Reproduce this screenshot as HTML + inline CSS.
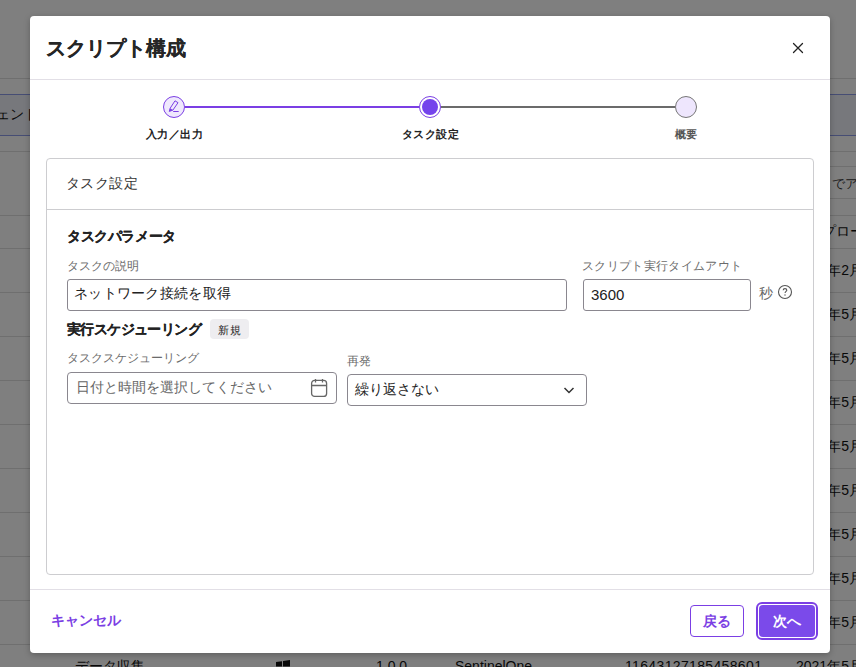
<!DOCTYPE html>
<html><head><meta charset="utf-8">
<style>
*{box-sizing:border-box;margin:0;padding:0}
html,body{width:856px;height:667px;overflow:hidden;font-family:"Liberation Sans",sans-serif;}
body{background:#fff;position:relative;}
.abs{position:absolute}
#bg{position:absolute;left:0;top:0;width:856px;height:667px;background:#fff;}
#overlay{position:absolute;left:0;top:0;width:856px;height:667px;background:rgba(0,0,0,0.5);}
#modal{position:absolute;left:30px;top:16px;width:800px;height:637px;background:#fff;border-radius:4px;box-shadow:0 2px 6px rgba(0,0,0,0.25);}
.t{position:absolute;white-space:nowrap;line-height:1;}
.b{-webkit-text-stroke:0.15px currentColor}
</style></head>
<body>
<div id="bg">
<div class="abs" style="left:0;top:78px;width:856px;height:1px;background:#dedede"></div>
<div class="abs" style="left:0;top:94px;width:856px;height:42px;background:#eff1f9;border-top:1px solid #8c9ae8;border-bottom:1px solid #8c9ae8"></div>
<div class="t" style="left:-4px;top:107px;font-size:14px;color:#111">ェント</div>
<div class="abs" style="left:0;top:151px;width:856px;height:1px;background:#dedede"></div>
<div class="abs" style="left:0;top:215px;width:856px;height:1px;background:#dedede"></div>
<div class="abs" style="left:0;top:248px;width:856px;height:1px;background:#dedede"></div>
<div class="abs" style="left:0;top:292px;width:856px;height:1px;background:#dedede"></div>
<div class="abs" style="left:0;top:336px;width:856px;height:1px;background:#dedede"></div>
<div class="abs" style="left:0;top:380px;width:856px;height:1px;background:#dedede"></div>
<div class="abs" style="left:0;top:424px;width:856px;height:1px;background:#dedede"></div>
<div class="abs" style="left:0;top:468px;width:856px;height:1px;background:#dedede"></div>
<div class="abs" style="left:0;top:512px;width:856px;height:1px;background:#dedede"></div>
<div class="abs" style="left:0;top:556px;width:856px;height:1px;background:#dedede"></div>
<div class="abs" style="left:0;top:600px;width:856px;height:1px;background:#dedede"></div>
<div class="abs" style="left:0;top:644px;width:856px;height:1px;background:#dedede"></div>
<div class="abs" style="left:806px;top:166px;width:50px;height:1px;background:#dedede"></div>
<div class="abs" style="left:806px;top:198px;width:50px;height:1px;background:#dedede"></div>
<div class="t" style="left:832px;top:177px;font-size:13px;color:#333">でア</div>
<div class="t" style="left:822px;top:224px;font-size:14px;color:#111">プロー</div>
<div class="t" style="left:796px;top:263px;font-size:14px;color:#111">2021年2月</div>
<div class="t" style="left:796px;top:307px;font-size:14px;color:#111">2021年5月</div>
<div class="t" style="left:796px;top:351px;font-size:14px;color:#111">2021年5月</div>
<div class="t" style="left:796px;top:395px;font-size:14px;color:#111">2021年5月</div>
<div class="t" style="left:796px;top:439px;font-size:14px;color:#111">2021年5月</div>
<div class="t" style="left:796px;top:483px;font-size:14px;color:#111">2021年5月</div>
<div class="t" style="left:796px;top:527px;font-size:14px;color:#111">2021年5月</div>
<div class="t" style="left:796px;top:571px;font-size:14px;color:#111">2021年5月</div>
<div class="t" style="left:796px;top:615px;font-size:14px;color:#111">2021年5月</div>
<div class="t" style="left:796px;top:659px;font-size:14px;color:#111">2021年5月</div>
<div class="t" style="left:75px;top:659px;font-size:14px;color:#111">データ収集</div>
<svg class="abs" style="left:276px;top:660px" width="14" height="14" viewBox="0 0 14 14"><path d="M0 2L6 1.2V6.6H0ZM7 1L14 0V6.6H7ZM0 7.4H6V12.8L0 12ZM7 7.4H14V14L7 13Z" fill="#111"/></svg>
<div class="t" style="left:376px;top:659px;font-size:14px;color:#111">1.0.0</div>
<div class="t" style="left:455px;top:659px;font-size:14px;color:#111">SentinelOne</div>
<div class="t" style="left:625px;top:659px;font-size:14px;color:#111;letter-spacing:0.35px">11643127185458601</div>
</div>
<div id="overlay"></div>
<div id="modal"></div>
<div id="content">
  <div class="t b" style="left:46px;top:38px;font-size:20px;font-weight:bold;color:#262626">スクリプト構成</div>
  <svg class="abs" style="left:792px;top:42px" width="12" height="12" viewBox="0 0 12 12"><path d="M1.5 1.5L10.5 10.5M10.5 1.5L1.5 10.5" stroke="#222" stroke-width="1.25" stroke-linecap="round"/></svg>
  <div class="abs" style="left:30px;top:79px;width:800px;height:1px;background:#e2dfe6"></div>

  <!-- stepper -->
  <div class="abs" style="left:185px;top:106px;width:234px;height:2px;background:#7b3fe4"></div>
  <div class="abs" style="left:441px;top:106px;width:234px;height:2px;background:#6b6b6b"></div>
  <div class="abs" style="left:163px;top:96px;width:22px;height:22px;border-radius:50%;border:1px solid #7b3fe4;background:#efe8fd"></div>
  <svg class="abs" style="left:163px;top:96px" width="22" height="22" viewBox="0 0 22 22"><path d="M6.3 15.4L7.1 12.3L12 4.8L15 6.7L9.9 14.1Z" fill="none" stroke="#7b3fe4" stroke-width="1" stroke-linejoin="miter"/><path d="M6.3 15.4L7.1 12.3L9.9 14.1Z" fill="#7b3fe4"/><path d="M10.2 15.5H15.7" stroke="#7b3fe4" stroke-width="1"/></svg>
  <div class="abs" style="left:419px;top:96px;width:22px;height:22px;border-radius:50%;border:1px solid #7b3fe4;background:#fff"></div>
  <div class="abs" style="left:422px;top:99px;width:16px;height:16px;border-radius:50%;background:#7443ec"></div>
  <div class="abs" style="left:675px;top:96px;width:22px;height:22px;border-radius:50%;border:1px solid #767676;background:#eee6fd"></div>
  <div class="t" style="left:144px;top:129px;width:60px;text-align:center;font-size:11px;letter-spacing:0.5px;text-indent:0.5px;font-weight:bold;color:#222">入力／出力</div>
  <div class="t" style="left:394px;top:129px;width:72px;text-align:center;font-size:11px;letter-spacing:0.5px;text-indent:0.5px;font-weight:bold;color:#222">タスク設定</div>
  <div class="t" style="left:656px;top:129px;width:60px;text-align:center;font-size:11px;letter-spacing:0.5px;text-indent:0.5px;font-weight:bold;color:#555">概要</div>

  <!-- card -->
  <div class="abs" style="left:46px;top:158px;width:768px;height:417px;border:1px solid #cdcdd0;border-radius:4px"></div>
  <div class="abs" style="left:47px;top:209px;width:766px;height:1px;background:#cdcdd0"></div>
  <div class="t" style="left:66px;top:176px;font-size:14px;color:#333;letter-spacing:0.4px">タスク設定</div>
  <div class="t b" style="left:67px;top:229px;font-size:14px;font-weight:bold;color:#222;letter-spacing:-0.4px">タスクパラメータ</div>
  <div class="t" style="left:67px;top:260px;font-size:12px;color:#6b6b6b">タスクの説明</div>
  <div class="abs" style="left:67px;top:279px;width:500px;height:32px;border:1px solid #8a878f;border-radius:3px"></div>
  <div class="t" style="left:74px;top:286px;font-size:14px;color:#222;letter-spacing:0.3px">ネットワーク接続を取得</div>
  <div class="t" style="left:582px;top:260px;font-size:12px;color:#6b6b6b;letter-spacing:0.35px">スクリプト実行タイムアウト</div>
  <div class="abs" style="left:583px;top:279px;width:168px;height:32px;border:1px solid #8a878f;border-radius:3px"></div>
  <div class="t" style="left:591px;top:287px;font-size:15px;color:#222">3600</div>
  <div class="t" style="left:759px;top:286px;font-size:14px;color:#666">秒</div>
  <svg class="abs" style="left:777px;top:284px" width="16" height="16" viewBox="0 0 16 16"><circle cx="8" cy="8" r="6.5" fill="none" stroke="#555" stroke-width="1.1"/><path d="M6.2 6.3C6.2 5.2 7 4.6 8 4.6C9 4.6 9.8 5.3 9.8 6.2C9.8 7.3 8.1 7.5 8.1 8.9" fill="none" stroke="#555" stroke-width="1.1"/><circle cx="8" cy="11" r="0.7" fill="#555"/></svg>

  <div class="t b" style="left:67px;top:322px;font-size:14px;font-weight:bold;color:#222;letter-spacing:-0.6px">実行スケジューリング</div>
  <div class="abs" style="left:210px;top:319px;width:39px;height:20px;border-radius:4px;background:#eeedf0"></div>
  <div class="t" style="left:218px;top:325px;font-size:11px;letter-spacing:1px;color:#222">新規</div>
  <div class="t" style="left:67px;top:352px;font-size:12px;color:#6b6b6b">タスクスケジューリング</div>
  <div class="abs" style="left:67px;top:372px;width:270px;height:32px;border:1px solid #8a878f;border-radius:4px"></div>
  <div class="t" style="left:76px;top:380px;font-size:14px;color:#666">日付と時間を選択してください</div>
  <svg class="abs" style="left:310px;top:378px" width="18" height="20" viewBox="0 0 18 20"><rect x="1.6" y="2.4" width="15" height="16" rx="3" fill="none" stroke="#666" stroke-width="1.3"/><path d="M1.6 7.5H16.6M5.5 1V4.5M12.5 1V4.5" stroke="#666" stroke-width="1.3"/></svg>
  <div class="t" style="left:347px;top:355px;font-size:12px;color:#6b6b6b">再発</div>
  <div class="abs" style="left:347px;top:374px;width:240px;height:32px;border:1px solid #8a878f;border-radius:4px"></div>
  <div class="t" style="left:355px;top:382px;font-size:14px;color:#222">繰り返さない</div>
  <svg class="abs" style="left:563px;top:386px" width="12" height="8" viewBox="0 0 12 8"><path d="M1.5 2L6 6.5L10.5 2" fill="none" stroke="#333" stroke-width="1.5"/></svg>

  <!-- footer -->
  <div class="abs" style="left:30px;top:589px;width:800px;height:1px;background:#e2dfe6"></div>
  <div class="t" style="left:51px;top:613px;font-size:14px;font-weight:bold;color:#7b3fe4">キャンセル</div>
  <div class="abs" style="left:690px;top:605px;width:54px;height:32px;border:1px solid #7b3fe4;border-radius:4px;background:#fff"></div>
  <div class="t" style="left:703px;top:614px;font-size:14px;font-weight:bold;color:#7b3fe4">戻る</div>
  <div class="abs" style="left:756px;top:602px;width:62px;height:38px;border:2px solid #7b3fe4;border-radius:6px;background:#fff"></div>
  <div class="abs" style="left:759px;top:605px;width:56px;height:32px;border-radius:4px;background:#7b4aea"></div>
  <div class="t" style="left:773px;top:614px;font-size:14px;font-weight:bold;color:#fff">次へ</div>
</div>
</body></html>
